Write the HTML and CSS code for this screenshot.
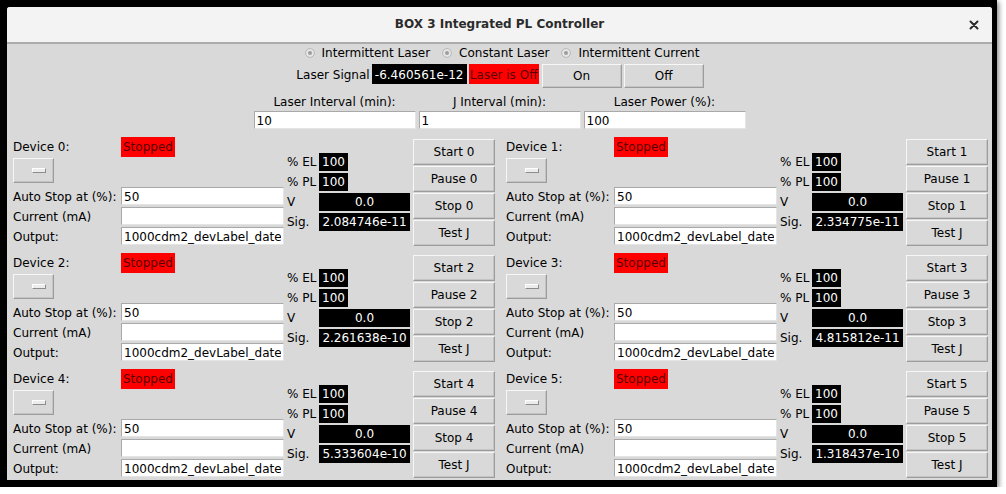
FILE: index.html
```html
<!DOCTYPE html>
<html>
<head>
<meta charset="utf-8">
<title>BOX 3 Integrated PL Controller</title>
<link rel="stylesheet" href="styles.css">
</head>
<body>
<div class="frame">
  <div class="window">
    <div class="titlebar">
      <span></span>
      <span class="title">BOX 3 Integrated PL Controller</span>
      <span class="close"><svg width="10" height="10" viewBox="0 0 10 10"><path d="M1.5 1.5 L8.5 8.5 M8.5 1.5 L1.5 8.5" stroke="#2b2b2b" stroke-width="2" stroke-linecap="round"/></svg></span>
    </div>
    <div class="body">
      <div class="modes">
        <span class="radio"><svg width="10" height="10" viewBox="0 0 10 10"><circle cx="5" cy="5" r="4.4" fill="#e6e6e6" stroke="#b2b2b2" stroke-width="0.9"/><circle cx="5" cy="5" r="2" fill="#9e9e9e"/></svg>Intermittent Laser</span>
        <span class="radio"><svg width="10" height="10" viewBox="0 0 10 10"><circle cx="5" cy="5" r="4.4" fill="#e6e6e6" stroke="#b2b2b2" stroke-width="0.9"/><circle cx="5" cy="5" r="2" fill="#9e9e9e"/></svg>Constant Laser</span>
        <span class="radio"><svg width="10" height="10" viewBox="0 0 10 10"><circle cx="5" cy="5" r="4.4" fill="#e6e6e6" stroke="#b2b2b2" stroke-width="0.9"/><circle cx="5" cy="5" r="2" fill="#9e9e9e"/></svg>Intermittent Current</span>
      </div>
      <div class="laser-row">
        <span class="lbl">Laser Signal</span>
        <span class="readout laser-sig">-6.460561e-12</span>
        <span class="alarm laser-state">Laser is Off</span>
        <button class="btn wide">On</button>
        <button class="btn wide">Off</button>
      </div>
      <div class="params">
        <span class="param-lbl">Laser Interval (min):</span>
        <span class="param-lbl">J Interval (min):</span>
        <span class="param-lbl">Laser Power (%):</span>
        <input class="entry" value="10">
        <input class="entry" value="1">
        <input class="entry" value="100">
      </div>
      <div class="devices">
        <div class="device">
          <div class="dev-left">
            <span class="lbl row20">Device 0:</span><span class="alarm stopped">Stopped</span>
            <span class="toggle"><span class="toggle-bar"></span></span><span></span>
            <span class="lbl">Auto Stop at (%):</span><input class="entry" value="50">
            <span class="lbl">Current (mA)</span><input class="entry" value="">
            <span class="lbl">Output:</span><input class="entry" value="1000cdm2_devLabel_date">
          </div>
          <div class="dev-mid">
            <span class="lbl">% EL</span><span class="readout pct">100</span>
            <span class="lbl">% PL</span><span class="readout pct">100</span>
            <span class="lbl">V</span><span class="readout val">0.0</span>
            <span class="lbl">Sig.</span><span class="readout val">2.084746e-11</span>
          </div>
          <div class="dev-btns">
            <button class="btn">Start 0</button><button class="btn">Pause 0</button><button class="btn">Stop 0</button><button class="btn">Test J</button>
          </div>
        </div>
        <div class="device">
          <div class="dev-left">
            <span class="lbl row20">Device 1:</span><span class="alarm stopped">Stopped</span>
            <span class="toggle"><span class="toggle-bar"></span></span><span></span>
            <span class="lbl">Auto Stop at (%):</span><input class="entry" value="50">
            <span class="lbl">Current (mA)</span><input class="entry" value="">
            <span class="lbl">Output:</span><input class="entry" value="1000cdm2_devLabel_date">
          </div>
          <div class="dev-mid">
            <span class="lbl">% EL</span><span class="readout pct">100</span>
            <span class="lbl">% PL</span><span class="readout pct">100</span>
            <span class="lbl">V</span><span class="readout val">0.0</span>
            <span class="lbl">Sig.</span><span class="readout val">2.334775e-11</span>
          </div>
          <div class="dev-btns">
            <button class="btn">Start 1</button><button class="btn">Pause 1</button><button class="btn">Stop 1</button><button class="btn">Test J</button>
          </div>
        </div>
        <div class="device">
          <div class="dev-left">
            <span class="lbl row20">Device 2:</span><span class="alarm stopped">Stopped</span>
            <span class="toggle"><span class="toggle-bar"></span></span><span></span>
            <span class="lbl">Auto Stop at (%):</span><input class="entry" value="50">
            <span class="lbl">Current (mA)</span><input class="entry" value="">
            <span class="lbl">Output:</span><input class="entry" value="1000cdm2_devLabel_date">
          </div>
          <div class="dev-mid">
            <span class="lbl">% EL</span><span class="readout pct">100</span>
            <span class="lbl">% PL</span><span class="readout pct">100</span>
            <span class="lbl">V</span><span class="readout val">0.0</span>
            <span class="lbl">Sig.</span><span class="readout val">2.261638e-10</span>
          </div>
          <div class="dev-btns">
            <button class="btn">Start 2</button><button class="btn">Pause 2</button><button class="btn">Stop 2</button><button class="btn">Test J</button>
          </div>
        </div>
        <div class="device">
          <div class="dev-left">
            <span class="lbl row20">Device 3:</span><span class="alarm stopped">Stopped</span>
            <span class="toggle"><span class="toggle-bar"></span></span><span></span>
            <span class="lbl">Auto Stop at (%):</span><input class="entry" value="50">
            <span class="lbl">Current (mA)</span><input class="entry" value="">
            <span class="lbl">Output:</span><input class="entry" value="1000cdm2_devLabel_date">
          </div>
          <div class="dev-mid">
            <span class="lbl">% EL</span><span class="readout pct">100</span>
            <span class="lbl">% PL</span><span class="readout pct">100</span>
            <span class="lbl">V</span><span class="readout val">0.0</span>
            <span class="lbl">Sig.</span><span class="readout val">4.815812e-11</span>
          </div>
          <div class="dev-btns">
            <button class="btn">Start 3</button><button class="btn">Pause 3</button><button class="btn">Stop 3</button><button class="btn">Test J</button>
          </div>
        </div>
        <div class="device">
          <div class="dev-left">
            <span class="lbl row20">Device 4:</span><span class="alarm stopped">Stopped</span>
            <span class="toggle"><span class="toggle-bar"></span></span><span></span>
            <span class="lbl">Auto Stop at (%):</span><input class="entry" value="50">
            <span class="lbl">Current (mA)</span><input class="entry" value="">
            <span class="lbl">Output:</span><input class="entry" value="1000cdm2_devLabel_date">
          </div>
          <div class="dev-mid">
            <span class="lbl">% EL</span><span class="readout pct">100</span>
            <span class="lbl">% PL</span><span class="readout pct">100</span>
            <span class="lbl">V</span><span class="readout val">0.0</span>
            <span class="lbl">Sig.</span><span class="readout val">5.333604e-10</span>
          </div>
          <div class="dev-btns">
            <button class="btn">Start 4</button><button class="btn">Pause 4</button><button class="btn">Stop 4</button><button class="btn">Test J</button>
          </div>
        </div>
        <div class="device">
          <div class="dev-left">
            <span class="lbl row20">Device 5:</span><span class="alarm stopped">Stopped</span>
            <span class="toggle"><span class="toggle-bar"></span></span><span></span>
            <span class="lbl">Auto Stop at (%):</span><input class="entry" value="50">
            <span class="lbl">Current (mA)</span><input class="entry" value="">
            <span class="lbl">Output:</span><input class="entry" value="1000cdm2_devLabel_date">
          </div>
          <div class="dev-mid">
            <span class="lbl">% EL</span><span class="readout pct">100</span>
            <span class="lbl">% PL</span><span class="readout pct">100</span>
            <span class="lbl">V</span><span class="readout val">0.0</span>
            <span class="lbl">Sig.</span><span class="readout val">1.318437e-10</span>
          </div>
          <div class="dev-btns">
            <button class="btn">Start 5</button><button class="btn">Pause 5</button><button class="btn">Stop 5</button><button class="btn">Test J</button>
          </div>
        </div>
      </div>
    </div>
  </div>
</div>
</body>
</html>
```
FILE: styles.css
```css
* { box-sizing: border-box; }
html, body { margin: 0; padding: 0; background: #ffffff; }
body {
  font-family: "DejaVu Sans", sans-serif;
  font-size: 12px;
  line-height: 14px;
  color: #000;
}
.frame {
  width: 997px;
  height: 487px;
  background: #000;
  padding: 7px 5px 7px 7px;
  box-shadow: 2px 2px 5px rgba(0,0,0,0.45);
}
.window {
  width: 985px;
  height: 473px;
  background: #d9d9d9;
  border-radius: 3px 3px 0 0;
  overflow: hidden;
}
.titlebar {
  height: 37px;
  background: #f3f3f3;
  border-bottom: 2px solid #acacac;
  display: grid;
  grid-template-columns: 1fr auto 1fr;
  align-items: center;
}
.title {
  font-family: "DejaVu Sans", sans-serif;
  font-weight: bold;
  font-size: 12px;
  color: #2b2b2b;
  line-height: 35px;
}
.close {
  justify-self: end;
  margin-right: 13px;
  display: flex;
}
.body {
  padding-top: 2px;
}
.modes {
  height: 14px;
  display: flex;
  justify-content: center;
  padding-left: 5px;
  gap: 12px;
}
.radio {
  display: flex;
  align-items: center;
  gap: 7px;
  white-space: nowrap;
}
.radio svg { display: block; }
.laser-row {
  margin-top: 4px;
  height: 24px;
  display: flex;
  justify-content: center;
  align-items: flex-start;
  padding-left: 3px;
}
.laser-row .lbl { line-height: 20px; padding-top: 1px; margin-right: 2px; }
.readout {
  background: #000;
  color: #fff;
  white-space: nowrap;
}
.alarm {
  background: #ff0000;
  color: #5a0000;
  white-space: nowrap;
}
.laser-sig {
  width: 95px;
  height: 20px;
  padding-top: 4px;
  text-align: center;
  margin-right: 2px;
}
.laser-state {
  width: 70px;
  height: 20px;
  padding-top: 4px;
  text-align: center;
  margin-right: 3px;
}
.btn {
  font-family: "DejaVu Sans", sans-serif;
  font-size: 12px;
  color: #000;
  background: #d9d9d9;
  border: 1px solid;
  border-color: #f7f7f7 #9c9c9c #9c9c9c #f7f7f7;
  box-shadow: inset -1px -1px 0 #c4c4c4;
  padding: 0;
  margin: 0;
  width: 82px;
  height: 26px;
}
.btn.wide {
  width: 80px;
  height: 24px;
  margin-right: 2px;
}
.params {
  margin-top: 7px;
  display: grid;
  grid-template-columns: repeat(3, 162px);
  grid-template-rows: 16px 18px;
  column-gap: 3px;
  justify-content: center;
}
.param-lbl {
  text-align: center;
  white-space: nowrap;
}
.entry {
  font-family: "DejaVu Sans", sans-serif;
  font-size: 12px;
  color: #000;
  background: #fff;
  border: 1px solid;
  border-color: #a9a9a9 #e4e4e4 #e4e4e4 #a9a9a9;
  height: 18px;
  padding: 1px 2px 0 2px;
  margin: 0;
  width: 100%;
  outline: none;
}
.devices {
  margin-top: 8px;
  padding-left: 6px;
  display: grid;
  grid-template-columns: 493px 493px;
  grid-auto-rows: 110px;
  row-gap: 6px;
}
.device {
  display: flex;
  align-items: flex-start;
}
.dev-left {
  width: 271px;
  display: grid;
  grid-template-columns: 108px 163px;
  grid-template-rows: 21px 29px 20px 20px 18px;
  align-items: start;
}
.dev-left .lbl {
  line-height: 18px;
  padding-top: 1px;
  white-space: nowrap;
}
.dev-left .row20 { line-height: 20px; padding-top: 0; }
.stopped {
  justify-self: start;
  height: 20px;
  line-height: 20px;
  padding: 0 2px;
  width: 54px;
}
.toggle {
  width: 41px;
  height: 25px;
  background: #d9d9d9;
  border: 1px solid;
  border-color: #f7f7f7 #9c9c9c #9c9c9c #f7f7f7;
  box-shadow: inset -1px -1px 0 #c4c4c4;
  display: flex;
  align-items: center;
  padding-left: 18px;
}
.toggle-bar {
  width: 14px;
  height: 5px;
  background: #ececec;
  border: 1px solid;
  border-color: #ffffff #8c8c8c #8c8c8c #ffffff;
}
.dev-mid {
  margin-left: 3px;
  width: 123px;
  padding-top: 16px;
  display: grid;
  grid-template-columns: 32px auto;
  grid-auto-rows: 18px;
  row-gap: 2px;
  align-items: center;
}
.dev-mid .lbl { line-height: 18px; white-space: nowrap; }
.readout.pct {
  justify-self: start;
  width: 29px;
  height: 18px;
  line-height: 18px;
  text-align: center;
}
.readout.val {
  width: 91px;
  height: 18px;
  line-height: 18px;
  text-align: center;
}
.dev-btns {
  margin-left: 3px;
  padding-top: 2px;
  display: flex;
  flex-direction: column;
  gap: 1px;
}
```
